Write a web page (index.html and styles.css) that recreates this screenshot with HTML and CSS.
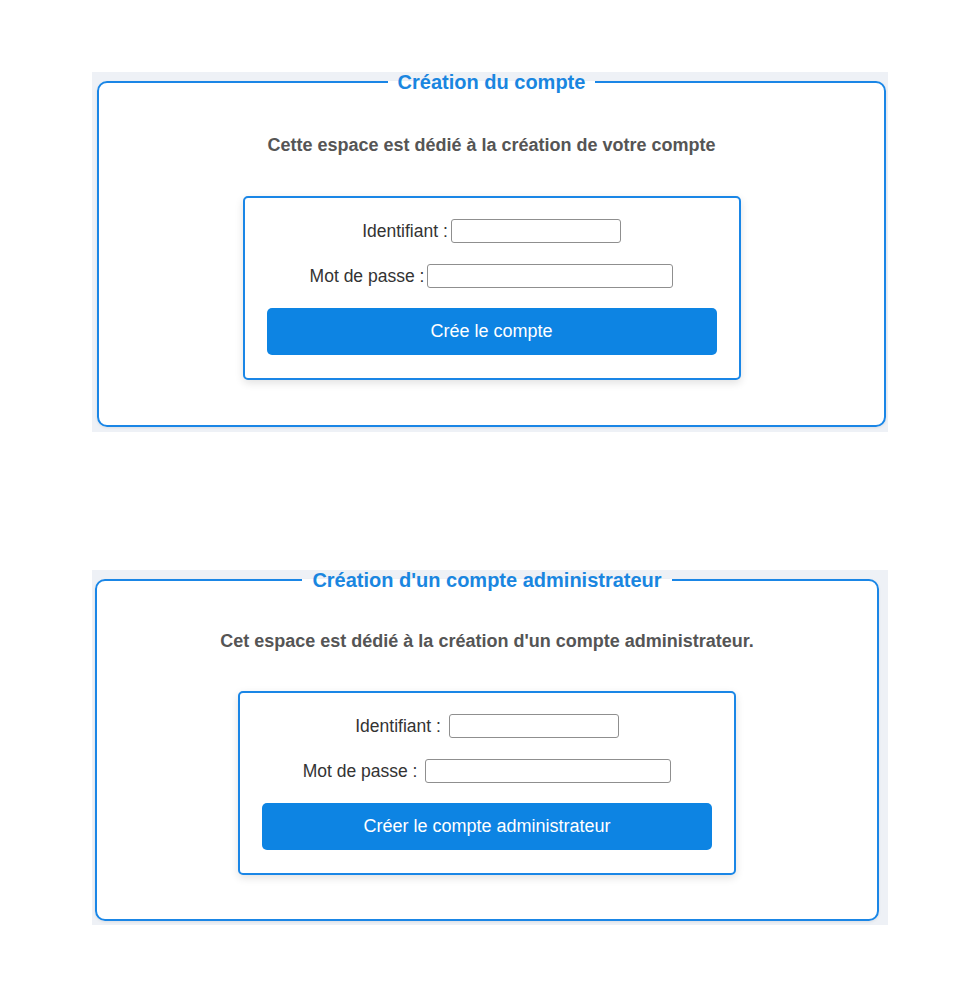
FILE: index.html
```html
<!DOCTYPE html>
<html lang="fr">
<head>
<meta charset="utf-8">
<title>Création de compte</title>
<link rel="stylesheet" href="styles.css">
</head>
<body>
<main class="page">
  <section class="panel panel--user">
    <fieldset class="frame">
      <legend class="frame-title">Création du compte</legend>
      <p class="intro">Cette espace est dédié à la création de votre compte</p>
      <form class="card">
        <div class="row"><label for="u1">Identifiant :</label><input class="field field--short" id="u1" type="text"></div>
        <div class="row"><label for="p1">Mot de passe :</label><input class="field field--long" id="p1" type="password"></div>
        <button class="submit" type="button">Crée le compte</button>
      </form>
    </fieldset>
  </section>

  <section class="panel panel--admin">
    <fieldset class="frame">
      <legend class="frame-title">Création d'un compte administrateur</legend>
      <p class="intro">Cet espace est dédié à la création d'un compte administrateur.</p>
      <form class="card">
        <div class="row"><label for="u2">Identifiant : </label><input class="field field--short" id="u2" type="text"></div>
        <div class="row"><label for="p2">Mot de passe : </label><input class="field field--long" id="p2" type="password"></div>
        <button class="submit" type="button">Créer le compte administrateur</button>
      </form>
    </fieldset>
  </section>
</main>
</body>
</html>
```

FILE: styles.css
```css
html, body {
  margin: 0;
  padding: 0;
  background: #ffffff;
  font-family: "Liberation Sans", Arial, Helvetica, sans-serif;
}

.page {
  width: 796px;
  margin-left: 92px;
  padding-top: 72px;
}

.panel {
  background: #eef1f6;
}

.panel--user {
  padding: 0 2px 5px 5px;
}

.panel--admin {
  margin-top: 138px;
  padding: 0 9px 4px 3px;
}

.frame {
  margin: 0;
  background: #ffffff;
  border: 2px solid #1a86e6;
  border-radius: 10px;
  padding: 0 20px 45px;
  box-shadow: 0 1px 3px rgba(0, 0, 0, 0.08);
  min-width: 0;
}

.panel--admin .frame {
  padding-bottom: 44px;
}

.frame-title {
  margin: 0 auto;
  padding: 0 10px;
  font-size: 20px;
  line-height: 20px;
  font-weight: bold;
  color: #1a86e0;
}

.intro {
  margin: 43px 0 41px;
  text-align: center;
  font-size: 18px;
  line-height: 20px;
  font-weight: bold;
  color: #555555;
}

.panel--admin .intro {
  margin: 41px 0 40px;
}

.card {
  width: 450px;
  margin: 0 auto;
  border: 2px solid #1a86e6;
  border-radius: 5px;
  background: #ffffff;
  box-shadow: 0 3px 8px rgba(0, 0, 0, 0.12);
  padding: 21px 22px 23px;
  box-sizing: content-box;
  display: flex;
  flex-direction: column;
  align-items: center;
}

.card .row {
  display: flex;
  align-items: center;
  justify-content: center;
  height: 24px;
  margin-bottom: 21px;
  font-size: 17.5px;
  color: #333333;
  white-space: pre;
}

.card .row + .row {
  margin-bottom: 20px;
}

.row label {
  margin-right: 3px;
}

.field {
  box-sizing: border-box;
  height: 24px;
  border: 1px solid #8f8f8f;
  border-radius: 3px;
  background: #ffffff;
  padding: 2px 4px;
  font-size: 14px;
}

.field--short { width: 170px; }
.field--long { width: 246px; }

.submit {
  width: 100%;
  height: 47px;
  border: none;
  border-radius: 5px;
  background: #0d84e3;
  color: #ffffff;
  font-family: "Liberation Sans", Arial, Helvetica, sans-serif;
  font-size: 18px;
  cursor: pointer;
}
```
